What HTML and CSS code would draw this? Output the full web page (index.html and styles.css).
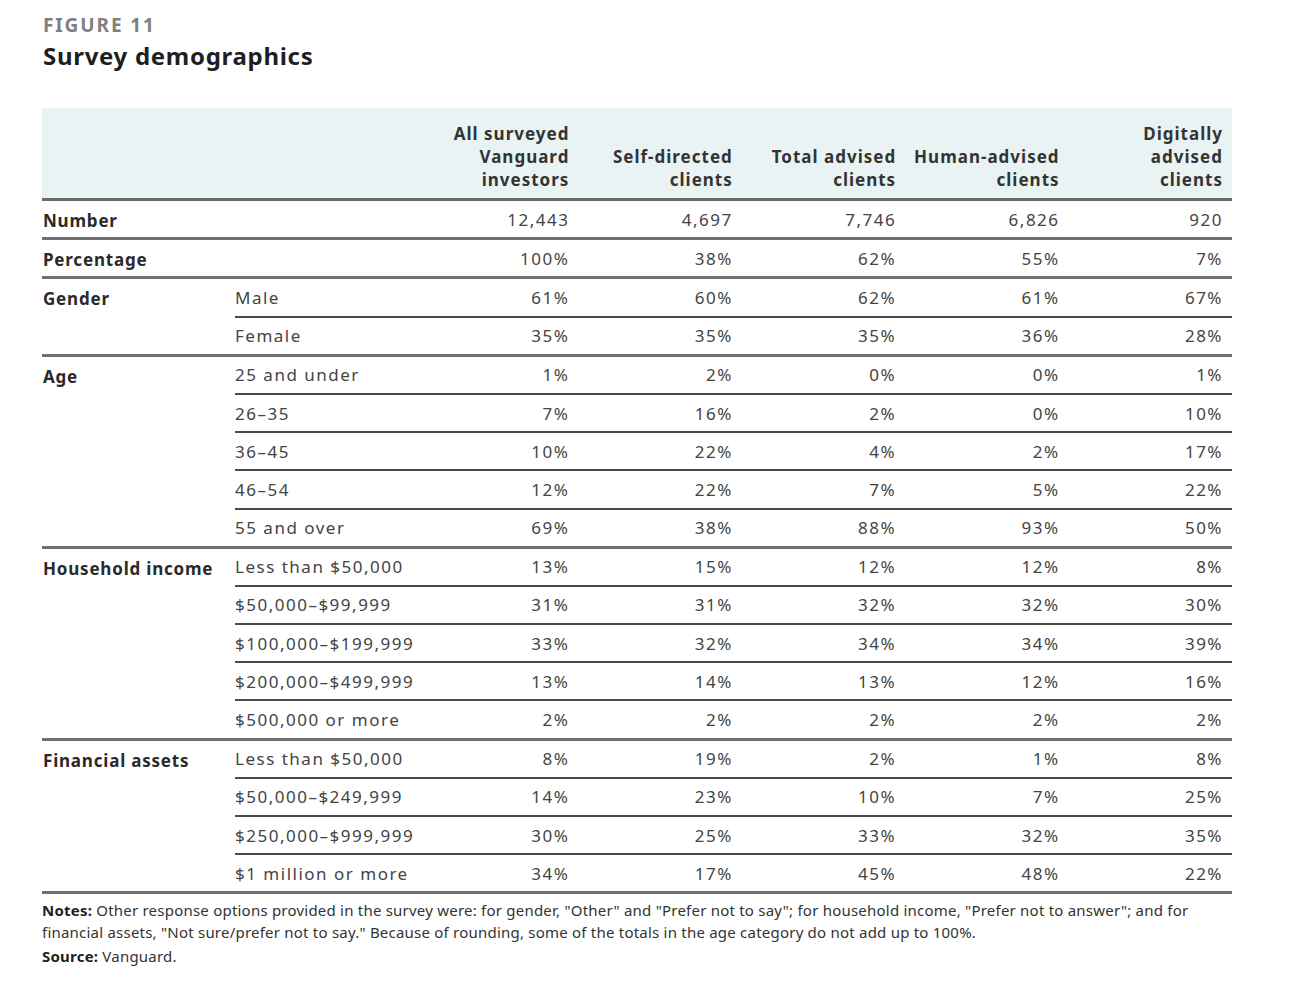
FILE: index.html
```html
<!DOCTYPE html>
<html>
<head>
<meta charset="utf-8">
<link rel="stylesheet" href="styles.css">
</head>
<body>
<div class="figure">
  <div class="fig-label">FIGURE 11</div>
  <h1 class="fig-title">Survey demographics</h1>
  <table class="demo">
    <colgroup>
      <col class="c-cat"><col class="c-sub"><col class="c-num"><col class="c-num"><col class="c-num"><col class="c-num"><col class="c-num">
    </colgroup>
    <thead>
      <tr>
        <th></th><th></th>
        <th>All surveyed<br>Vanguard<br>investors</th>
        <th>Self-directed<br>clients</th>
        <th>Total advised<br>clients</th>
        <th>Human-advised<br>clients</th>
        <th>Digitally<br>advised<br>clients</th>
      </tr>
    </thead>
    <tbody>
      <tr class="grp"><td class="cat" colspan="2">Number</td><td>12,443</td><td>4,697</td><td>7,746</td><td>6,826</td><td>920</td></tr>
      <tr class="grp"><td class="cat" colspan="2">Percentage</td><td>100%</td><td>38%</td><td>62%</td><td>55%</td><td>7%</td></tr>

      <tr class="in"><td class="cat" rowspan="2">Gender</td><td class="sub">Male</td><td>61%</td><td>60%</td><td>62%</td><td>61%</td><td>67%</td></tr>
      <tr class="grp"><td class="sub">Female</td><td>35%</td><td>35%</td><td>35%</td><td>36%</td><td>28%</td></tr>

      <tr class="in"><td class="cat" rowspan="5">Age</td><td class="sub">25 and under</td><td>1%</td><td>2%</td><td>0%</td><td>0%</td><td>1%</td></tr>
      <tr class="in"><td class="sub">26–35</td><td>7%</td><td>16%</td><td>2%</td><td>0%</td><td>10%</td></tr>
      <tr class="in"><td class="sub">36–45</td><td>10%</td><td>22%</td><td>4%</td><td>2%</td><td>17%</td></tr>
      <tr class="in"><td class="sub">46–54</td><td>12%</td><td>22%</td><td>7%</td><td>5%</td><td>22%</td></tr>
      <tr class="grp"><td class="sub">55 and over</td><td>69%</td><td>38%</td><td>88%</td><td>93%</td><td>50%</td></tr>

      <tr class="in"><td class="cat" rowspan="5">Household income</td><td class="sub">Less than $50,000</td><td>13%</td><td>15%</td><td>12%</td><td>12%</td><td>8%</td></tr>
      <tr class="in"><td class="sub">$50,000–$99,999</td><td>31%</td><td>31%</td><td>32%</td><td>32%</td><td>30%</td></tr>
      <tr class="in"><td class="sub">$100,000–$199,999</td><td>33%</td><td>32%</td><td>34%</td><td>34%</td><td>39%</td></tr>
      <tr class="in"><td class="sub">$200,000–$499,999</td><td>13%</td><td>14%</td><td>13%</td><td>12%</td><td>16%</td></tr>
      <tr class="grp"><td class="sub">$500,000 or more</td><td>2%</td><td>2%</td><td>2%</td><td>2%</td><td>2%</td></tr>

      <tr class="in"><td class="cat" rowspan="4">Financial assets</td><td class="sub">Less than $50,000</td><td>8%</td><td>19%</td><td>2%</td><td>1%</td><td>8%</td></tr>
      <tr class="in"><td class="sub">$50,000–$249,999</td><td>14%</td><td>23%</td><td>10%</td><td>7%</td><td>25%</td></tr>
      <tr class="in"><td class="sub">$250,000–$999,999</td><td>30%</td><td>25%</td><td>33%</td><td>32%</td><td>35%</td></tr>
      <tr class="grp"><td class="sub">$1 million or more</td><td>34%</td><td>17%</td><td>45%</td><td>48%</td><td>22%</td></tr>
    </tbody>
  </table>
  <div class="notes">
    <p><b>Notes:</b> Other response options provided in the survey were: for gender, "Other" and "Prefer not to say"; for household income, "Prefer not to answer"; and for<br>financial assets, "Not sure/prefer not to say." Because of rounding, some of the totals in the age category do not add up to 100%.</p>
    <p class="source"><b>Source:</b> Vanguard.</p>
  </div>
</div>
</body>
</html>
```

FILE: styles.css
```css
html, body {
  margin: 0;
  padding: 0;
  background: #ffffff;
}
body {
  font-family: "Noto Sans", "Liberation Sans", sans-serif;
  color: #333;
}
.figure {
  padding: 13px 66px 0 42px;
  width: 1190px;
}
.fig-label {
  font-size: 19px;
  font-weight: 700;
  color: #808080;
  line-height: 24px;
  margin-left: 1px;
  letter-spacing: 1.9px;
}
.fig-title {
  margin: 3px 0 0 1px;
  font-size: 24px;
  font-weight: 700;
  color: #1f1f1f;
  line-height: 32px;
  letter-spacing: 0.7px;
}
.demo {
  margin-top: 36px;
  width: 1190px;
  border-collapse: collapse;
  table-layout: fixed;
  font-size: 17px;
  letter-spacing: 1.5px;
}
.c-cat { width: 193px; }
.c-sub { width: 180px; }
.c-num { width: 163.4px; }
.demo thead th {
  background: #e9f3f3;
  text-align: right;
  vertical-align: bottom;
  font-weight: 700;
  color: #333;
  line-height: 23px;
  letter-spacing: 1px;
  padding: 14px 9px 7px 0;
  border-bottom: 3px solid #6b6b6b;
}
.demo td {
  height: 36.2px;
  padding: 0 9px 0 0;
  text-align: right;
  color: #444;
  vertical-align: middle;
  white-space: nowrap;
}
.demo td.cat {
  text-align: left;
  vertical-align: top;
  padding: 8px 0 0 1px;
  font-weight: 700;
  color: #2a2a2a;
  letter-spacing: 0.8px;
  height: auto;
}
.demo td.sub {
  text-align: left;
  padding-left: 0;
  color: #444;
}
.demo tr.grp td { border-bottom: 3px solid #707070; }
.demo tr.in td { border-bottom: 2px solid #4a4a4a; }
.demo tr.in td.cat { border-bottom: 3px solid #707070; }
.demo tr.grp td.cat { border-bottom: 3px solid #707070; }
.notes {
  margin-top: 5px;
  font-size: 15px;
  color: #333;
  letter-spacing: 0.22px;
  line-height: 22px;
  white-space: nowrap;
}
.notes p { margin: 0; }
.notes b { font-weight: 700; color: #1f1f1f; }
.notes .source { margin-top: 2px; }
```
